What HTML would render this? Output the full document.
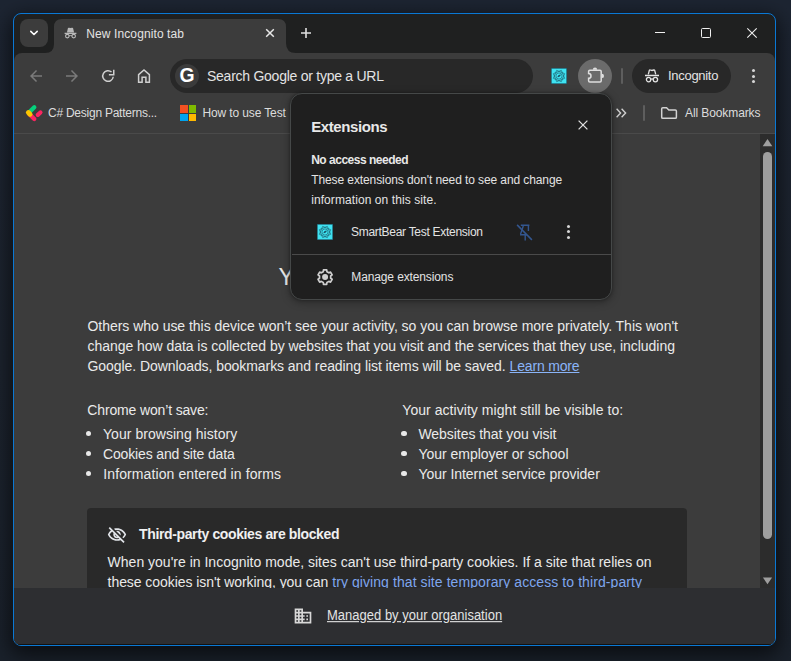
<!DOCTYPE html><html lang="en"><head><meta charset="utf-8"><title>New Incognito tab</title><style>
*{box-sizing:border-box}
html,body{margin:0;padding:0}
body{width:791px;height:661px;overflow:hidden;position:relative;background:#1b212b;font-family:'Liberation Sans',sans-serif;}
#desk{position:absolute;left:0;top:0;width:791px;height:661px;background:linear-gradient(180deg,#1d2532 0%,#1c232e 55%,#1a212b 100%);}
#win{position:absolute;left:13px;top:13px;width:763px;height:633px;border:1px solid #0a78d4;border-radius:8px;overflow:hidden;background:#1f2020;box-shadow:0 6px 20px 3px rgba(0,0,0,.6);}
#pg{position:absolute;left:-14px;top:-14px;width:791px;height:661px;}
.a{position:absolute}
.t{position:absolute;white-space:pre;line-height:1em;}
.t a{color:#8ab4f8;text-decoration:underline;}
.t a.nu{text-decoration:none;color:#7fa6ee}
svg{position:absolute;overflow:visible}
</style></head><body>
<div id="desk"></div>
<div id="win"><div id="pg">
<div class="a" style="left:20px;top:19px;width:28px;height:28px;border-radius:8px;background:#3c3c3c"></div>
<svg style="left:28px;top:27px" width="12" height="12" viewBox="0 0 12 12"><path d="M2.8 4.4 L6 7.5 L9.2 4.4" fill="none" stroke="#fff" stroke-width="1.6" stroke-linecap="round" stroke-linejoin="round"/></svg>
<div class="a" style="left:14px;top:53px;width:761px;height:600px;border-radius:8px 8px 0 0;background:#3c3c3c"></div>
<svg style="left:45px;top:19px" width="252" height="35" viewBox="0 0 252 35"><path d="M0 34 Q9 34 9 25 L9 8 Q9 0 17 0 L233 0 Q241 0 241 8 L241 24 Q241 34 251 34 L251 35 L0 35 Z" fill="#3c3c3c"/></svg>
<svg style="left:62px;top:25px" width="16" height="16" viewBox="62 25 16 16" fill="none" stroke="#b8b8b8"><path d="M66.9 32.4 L67.9 28.3 Q68.1 27.4 69 27.7 L70.5 28.1 L72 27.7 Q72.9 27.4 73.1 28.3 L74.1 32.4 Z" fill="#b8b8b8" stroke="none"/><path d="M64.6 33.4 H76.4" stroke-width="1.2"/><circle cx="67.3" cy="36.1" r="1.75" stroke-width="1.1"/><circle cx="73.7" cy="36.1" r="1.75" stroke-width="1.1"/><path d="M69 35.9 Q70.5 35.2 72 35.9" stroke-width="1"/></svg>
<div class="t" style="left:86.30px;top:28.04px;font-size:12px;font-weight:400;color:#e3e3e3;letter-spacing:0.102px;">New Incognito tab</div>
<svg style="left:264px;top:27px" width="12" height="12" viewBox="0 0 12 12"><path d="M2.2 2.2 L9.8 9.8 M9.8 2.2 L2.2 9.8" stroke="#e8e8e8" stroke-width="1.5" fill="none"/></svg>
<svg style="left:300px;top:27px" width="12" height="12" viewBox="0 0 12 12"><path d="M6 1 V11 M1 6 H11" stroke="#e0e0e0" stroke-width="1.6" fill="none"/></svg>
<div class="a" style="left:655px;top:32px;width:10px;height:1px;background:#f0f0f0"></div>
<div class="a" style="left:701px;top:28px;width:10px;height:10px;border:1px solid #f0f0f0;border-radius:1.5px"></div>
<svg style="left:747px;top:28px" width="10" height="10" viewBox="0 0 10 10"><path d="M0.3 0.3 L9.7 9.7 M9.7 0.3 L0.3 9.7" stroke="#f0f0f0" stroke-width="1.1" fill="none"/></svg>
<svg style="left:27px;top:67px" width="18" height="18" viewBox="0 0 24 24"><path d="M20 11H7.83l5.59-5.59L12 4l-8 8 8 8 1.41-1.41L7.83 13H20v-2z" fill="#7a7a7a"/></svg>
<svg style="left:63px;top:67px" width="18" height="18" viewBox="0 0 24 24"><path d="M20 11H7.83l5.59-5.59L12 4l-8 8 8 8 1.41-1.41L7.83 13H20v-2z" fill="#7a7a7a" transform="translate(24 0) scale(-1 1)"/></svg>
<svg style="left:99px;top:67px" width="18" height="18" viewBox="99 67 18 18" fill="none" stroke="#cfcfcf" stroke-width="1.5"><path d="M113.25 76.74 A5.3 5.3 0 1 1 111.55 72.06"/><path d="M113.75 69.8 V74.75 H108.9"/></svg>
<svg style="left:136px;top:68px" width="16" height="16" viewBox="0 0 16 16"><path d="M2.6 14.3 V6.6 L8 1.9 L13.4 6.6 V14.3 H9.9 V9.2 H6.1 V14.3 Z" fill="none" stroke="#cfcfcf" stroke-width="1.5" stroke-linejoin="miter"/></svg>
<div class="a" style="left:170px;top:59px;width:363px;height:34px;border-radius:17px;background:#282828"></div>
<div class="a" style="left:175px;top:64px;width:24px;height:24px;border-radius:12px;background:#3b3b3b"></div>
<div class="t" style="left:179.6px;top:66.1px;font-size:19.4px;font-weight:700;color:#fff;letter-spacing:0">G</div>
<div class="t" style="left:207.00px;top:69.15px;font-size:14px;font-weight:400;color:#e3e3e3;letter-spacing:-0.256px;">Search Google or type a URL</div>
<svg style="left:551px;top:68px" width="16" height="16" viewBox="0 0 16 16"><rect width="16" height="16" fill="#1d5b6c"/><rect x="0.7" y="0.7" width="14.6" height="14.6" fill="#3fe3f1"/><g fill="none" stroke="#1c6576" stroke-width="0.7"><path d="M13.64 10.33 L5.67 13.64 L2.36 5.67 L10.33 2.36 Z"/><path d="M10.33 13.64 L2.36 10.33 L5.67 2.36 L13.64 5.67 Z"/><circle cx="8" cy="8" r="3.1"/><path d="M6.4 9.3 Q6.6 6.9 9.8 6.6 Q9.4 9.4 6.4 9.3 Z" fill="#17586a" stroke="none"/></g></svg>
<div class="a" style="left:578px;top:59px;width:34px;height:34px;border-radius:17px;background:#6b6b6b"></div>
<svg style="left:585px;top:65px" width="22" height="22" viewBox="585 65 22 22"><path d="M589.8 70.2 H600 Q601.2 70.2 601.2 71.4 V80.7 Q601.2 81.9 600 81.9 H589.8 Q588.6 81.9 588.6 80.7 V78.3 A2.4 2.4 0 0 0 588.6 73.5 V71.4 Q588.6 70.2 589.8 70.2 Z" fill="none" stroke="#dedede" stroke-width="1.5"/><path d="M592.8 69.7 A2.2 2.3 0 0 1 597.2 69.7 Z" fill="#dedede"/><path d="M601.7 73.7 A2.3 2.2 0 0 1 601.7 78.1 Z" fill="#dedede"/></svg>
<div class="a" style="left:621px;top:68px;width:2px;height:16px;border-radius:1px;background:#5e5e5e"></div>
<div class="a" style="left:632px;top:59px;width:99px;height:34px;border-radius:17px;background:#282828"></div>
<svg style="left:644px;top:67.5px" width="16" height="16" viewBox="0 0 16 16" fill="none" stroke="#e3e3e3"><path d="M4.3 6.4 L5.3 2.5 Q5.5 1.8 6.2 2 L8 2.5 L9.8 2 Q10.5 1.8 10.7 2.5 L11.7 6.4" stroke-width="1.3"/><path d="M1 7.5 H15" stroke-width="1.4"/><circle cx="4.6" cy="11.6" r="2.2" stroke-width="1.3"/><circle cx="11.4" cy="11.6" r="2.2" stroke-width="1.3"/><path d="M6.8 11.3 Q8 10.5 9.2 11.3" stroke-width="1.2"/></svg>
<div class="t" style="left:668.00px;top:69.00px;font-size:13px;font-weight:400;color:#e3e3e3;letter-spacing:-0.296px;">Incognito</div>
<div class="a" style="left:751.5px;top:69.0px;width:3px;height:3px;border-radius:50%;background:#d6d6d6"></div>
<div class="a" style="left:751.5px;top:74.5px;width:3px;height:3px;border-radius:50%;background:#d6d6d6"></div>
<div class="a" style="left:751.5px;top:80.0px;width:3px;height:3px;border-radius:50%;background:#d6d6d6"></div>
<svg style="left:25px;top:104px" width="18" height="18" viewBox="25 104 18 18" fill="none" stroke-linecap="round" stroke-width="4.3"><path d="M29.3 114 L34.3 119" stroke="#fa2560"/><path d="M28.8 112.8 L34.3 107.3" stroke="#05d17c"/><path d="M28.4 112.6 L30.0 114.2" stroke="#fdc500" stroke-width="5"/><path d="M37.8 114.8 L40.4 112.5" stroke="#fa2560"/></svg>
<div class="t" style="left:48.00px;top:107.24px;font-size:12px;font-weight:400;color:#dcdcdc;letter-spacing:-0.243px;">C# Design Patterns...</div>
<div class="a" style="left:180px;top:105px;width:7.5px;height:7.5px;background:#f25022"></div>
<div class="a" style="left:188.5px;top:105px;width:7.5px;height:7.5px;background:#7fba00"></div>
<div class="a" style="left:180px;top:113.5px;width:7.5px;height:7.5px;background:#00a4ef"></div>
<div class="a" style="left:188.5px;top:113.5px;width:7.5px;height:7.5px;background:#ffb900"></div>
<div class="t" style="left:202.40px;top:107.24px;font-size:12px;font-weight:400;color:#dcdcdc;letter-spacing:-0.118px;">How to use Test</div>
<svg style="left:615px;top:107px" width="12" height="12" viewBox="0 0 12 12"><path d="M1.6 1.8 L5.6 6 L1.6 10.2 M6.6 1.8 L10.6 6 L6.6 10.2" fill="none" stroke="#d0d0d0" stroke-width="1.4"/></svg>
<div class="a" style="left:643px;top:105px;width:2px;height:16px;border-radius:1px;background:#5e5e5e"></div>
<svg style="left:659px;top:105px" width="20" height="16" viewBox="659 105 20 16"><path d="M661.7 108.8 Q661.7 107.7 662.8 107.7 H666.6 L668.8 110 H675.3 Q676.4 110 676.4 111.1 V117.2 Q676.4 118.3 675.3 118.3 H662.8 Q661.7 118.3 661.7 117.2 Z" fill="none" stroke="#d2d2d2" stroke-width="1.5" stroke-linejoin="round"/></svg>
<div class="t" style="left:685.00px;top:107.24px;font-size:12px;font-weight:400;color:#dcdcdc;letter-spacing:-0.099px;">All Bookmarks</div>
<div class="a" style="left:14px;top:133px;width:762px;height:1px;background:#4a4a4a"></div>
<div class="t" style="left:278.50px;top:266.39px;font-size:23.4px;font-weight:400;color:#e8e8e8;letter-spacing:-0.592px;">You’ve gone Incognito</div>
<div class="t" style="left:87.50px;top:319.15px;font-size:14px;font-weight:400;color:#eaeaea;letter-spacing:-0.030px;">Others who use this device won’t see your activity, so you can browse more privately. This won't</div>
<div class="t" style="left:87.50px;top:339.15px;font-size:14px;font-weight:400;color:#eaeaea;letter-spacing:-0.042px;">change how data is collected by websites that you visit and the services that they use, including</div>
<div class="t" style="left:87.50px;top:359.15px;font-size:14px;font-weight:400;color:#eaeaea;letter-spacing:-0.068px;">Google. Downloads, bookmarks and reading list items will be saved.</div>
<div class="t" style="left:509.60px;top:359.15px;font-size:14px;font-weight:400;color:#eaeaea;letter-spacing:-0.177px;"><a>Learn more</a></div>
<div class="t" style="left:87.30px;top:403.15px;font-size:14px;font-weight:400;color:#eaeaea;letter-spacing:-0.148px;">Chrome won’t save:</div>
<div class="t" style="left:402.30px;top:403.15px;font-size:14px;font-weight:400;color:#eaeaea;letter-spacing:0.051px;">Your activity might still be visible to:</div>
<div class="a" style="left:86px;top:431.0px;width:5.2px;height:5.2px;border-radius:50%;background:#e8e8e8"></div>
<div class="a" style="left:401.4px;top:431.0px;width:5.2px;height:5.2px;border-radius:50%;background:#e8e8e8"></div>
<div class="a" style="left:86px;top:451.0px;width:5.2px;height:5.2px;border-radius:50%;background:#e8e8e8"></div>
<div class="a" style="left:401.4px;top:451.0px;width:5.2px;height:5.2px;border-radius:50%;background:#e8e8e8"></div>
<div class="a" style="left:86px;top:471.0px;width:5.2px;height:5.2px;border-radius:50%;background:#e8e8e8"></div>
<div class="a" style="left:401.4px;top:471.0px;width:5.2px;height:5.2px;border-radius:50%;background:#e8e8e8"></div>
<div class="t" style="left:103.00px;top:427.15px;font-size:14px;font-weight:400;color:#eaeaea;letter-spacing:0.044px;">Your browsing history</div>
<div class="t" style="left:103.00px;top:447.15px;font-size:14px;font-weight:400;color:#eaeaea;letter-spacing:-0.147px;">Cookies and site data</div>
<div class="t" style="left:103.30px;top:467.15px;font-size:14px;font-weight:400;color:#eaeaea;letter-spacing:0.100px;">Information entered in forms</div>
<div class="t" style="left:418.40px;top:427.15px;font-size:14px;font-weight:400;color:#eaeaea;letter-spacing:-0.047px;">Websites that you visit</div>
<div class="t" style="left:418.40px;top:447.15px;font-size:14px;font-weight:400;color:#eaeaea;letter-spacing:-0.016px;">Your employer or school</div>
<div class="t" style="left:418.40px;top:467.15px;font-size:14px;font-weight:400;color:#eaeaea;letter-spacing:-0.033px;">Your Internet service provider</div>
<div class="a" style="left:87px;top:508px;width:600px;height:120px;border-radius:4px;background:#292929"></div>
<svg style="left:107px;top:524.6px" width="20" height="20" viewBox="0 0 24 24"><path fill="#e0e3e8" d="M12 6c3.79 0 7.17 2.13 8.82 5.5-.59 1.22-1.42 2.27-2.41 3.12l1.41 1.41c1.39-1.23 2.49-2.77 3.18-4.53C21.27 7.11 17 4 12 4c-1.27 0-2.49.2-3.64.57l1.65 1.65C10.66 6.09 11.32 6 12 6zm-1.07 1.14L13 9.21c.57.25 1.03.71 1.28 1.28l2.07 2.07c.08-.34.14-.7.14-1.07C16.5 9.01 14.48 7 12 7c-.37 0-.72.05-1.07.14zM2.01 3.87l2.68 2.68C3.06 7.83 1.77 9.53 1 11.5 2.73 15.89 7 19 12 19c1.52 0 2.98-.29 4.32-.82l3.42 3.42 1.41-1.41L3.42 2.45 2.01 3.87zm7.5 7.5l2.61 2.61c-.04.01-.08.02-.12.02-1.38 0-2.5-1.12-2.5-2.5 0-.05.01-.08.01-.13zm-3.4-3.4l1.75 1.75c-.23.55-.36 1.15-.36 1.78 0 2.48 2.02 4.5 4.5 4.5.63 0 1.23-.13 1.77-.36l.98.98c-.88.24-1.8.38-2.75.38-3.79 0-7.17-2.13-8.82-5.5.7-1.43 1.72-2.61 2.93-3.53z"/></svg>
<div class="t" style="left:139.10px;top:527.15px;font-size:14px;font-weight:700;color:#f0f0f0;letter-spacing:-0.374px;">Third-party cookies are blocked</div>
<div class="t" style="left:107.60px;top:555.45px;font-size:14px;font-weight:400;color:#eaeaea;letter-spacing:0.002px;">When you're in Incognito mode, sites can't use third-party cookies. If a site that relies on</div>
<div class="t" style="left:107.60px;top:575.35px;font-size:14px;font-weight:400;color:#eaeaea;letter-spacing:-0.063px;">these cookies isn't working, you can</div>
<div class="t" style="left:332.20px;top:575.35px;font-size:14px;font-weight:400;color:#eaeaea;letter-spacing:0.078px;"><a class="nu">try giving that site temporary access to third-party</a></div>
<div class="a" style="left:760px;top:134px;width:16px;height:454px;background:#2c2c2c"></div>
<svg style="left:760px;top:134px" width="15" height="454" viewBox="760 134 15 454"><path d="M767.5 139 L772.3 146.2 L762.7 146.2 Z" fill="#9e9e9e"/><rect x="763" y="152" width="9" height="387" rx="4.5" fill="#9e9e9e"/><path d="M762.9 577.5 L772.1 577.5 L767.5 584.3 Z" fill="#9e9e9e"/></svg>
<div class="a" style="left:14px;top:588px;width:762px;height:58px;background:#2d2e31"></div>
<div class="a" style="left:14px;top:644px;width:762px;height:1px;background:#111"></div>
<svg style="left:293px;top:605.5px" width="20" height="20" viewBox="0 0 24 24"><path d="M12 7V3H2v18h20V7H12zM6 19H4v-2h2v2zm0-4H4v-2h2v2zm0-4H4V9h2v2zm0-4H4V5h2v2zm4 12H8v-2h2v2zm0-4H8v-2h2v2zm0-4H8V9h2v2zm0-4H8V5h2v2zm10 12h-8v-2h2v-2h-2v-2h2v-2h-2V9h8v10zm-2-8h-2v2h2v-2zm0 4h-2v2h2v-2z" fill="#d8d8d8"/></svg>
<div class="t" style="left:327.00px;top:608.70px;font-size:13px;font-weight:400;color:#e3e3e3;letter-spacing:0.008px;text-decoration:underline;transform:scaleY(1.11);transform-origin:0 84.65%;">Managed by your organisation</div>
<div class="a" style="left:290px;top:93px;width:322px;height:207px;border-radius:12px;background:#1f1f1f;border:1px solid #454848;box-shadow:0 2px 8px rgba(0,0,0,.35),0 0 3px rgba(0,0,0,.3)"></div>
<div class="t" style="left:311.20px;top:118.80px;font-size:15px;font-weight:700;color:#e8e8e8;letter-spacing:-0.392px;">Extensions</div>
<svg style="left:577px;top:119px" width="12" height="12" viewBox="0 0 12 12"><path d="M1.6 1.6 L10.4 10.4 M10.4 1.6 L1.6 10.4" stroke="#dcdcdc" stroke-width="1.3" fill="none"/></svg>
<div class="t" style="left:311.20px;top:153.54px;font-size:12px;font-weight:700;color:#e8e8e8;letter-spacing:-0.488px;">No access needed</div>
<div class="t" style="left:311.20px;top:173.94px;font-size:12px;font-weight:400;color:#e3e3e3;letter-spacing:-0.094px;">These extensions don't need to see and change</div>
<div class="t" style="left:311.20px;top:193.74px;font-size:12px;font-weight:400;color:#e3e3e3;letter-spacing:0.079px;">information on this site.</div>
<svg style="left:317px;top:224px" width="16" height="16" viewBox="0 0 16 16"><rect width="16" height="16" fill="#1d5b6c"/><rect x="0.7" y="0.7" width="14.6" height="14.6" fill="#3fe3f1"/><g fill="none" stroke="#1c6576" stroke-width="0.7"><path d="M13.64 10.33 L5.67 13.64 L2.36 5.67 L10.33 2.36 Z"/><path d="M10.33 13.64 L2.36 10.33 L5.67 2.36 L13.64 5.67 Z"/><circle cx="8" cy="8" r="3.1"/><path d="M6.4 9.3 Q6.6 6.9 9.8 6.6 Q9.4 9.4 6.4 9.3 Z" fill="#17586a" stroke="none"/></g></svg>
<div class="t" style="left:351.00px;top:226.04px;font-size:12px;font-weight:400;color:#e3e3e3;letter-spacing:-0.283px;">SmartBear Test Extension</div>
<svg style="left:515px;top:222px" width="20" height="20" viewBox="515 222 20 20" fill="none" stroke="#33568f" stroke-width="1.4"><path d="M520.8 225.3 H529.4 M528.4 225.3 V231 M523.3 226 L520.5 234.2 M520 234.7 H527 M525.2 234.7 V240.6"/><path d="M517.1 224.9 L531.9 239.9" stroke-width="1.5"/></svg>
<div class="a" style="left:567.3px;top:224.8px;width:3.2px;height:3.2px;border-radius:50%;background:#d6d6d6"></div>
<div class="a" style="left:567.3px;top:230.3px;width:3.2px;height:3.2px;border-radius:50%;background:#d6d6d6"></div>
<div class="a" style="left:567.3px;top:235.8px;width:3.2px;height:3.2px;border-radius:50%;background:#d6d6d6"></div>
<div class="a" style="left:292px;top:254px;width:319px;height:1px;background:#4a4a4a"></div>
<svg style="left:317px;top:269px" width="16.2" height="16.2" viewBox="0 0 16.2 16.2"><path d="M6.28 2.70 L6.49 0.88 L9.71 0.88 L9.92 2.70 L11.87 3.82 L13.55 3.09 L15.16 5.89 L13.69 6.97 L13.69 9.23 L15.16 10.31 L13.55 13.11 L11.87 12.38 L9.92 13.50 L9.71 15.32 L6.49 15.32 L6.28 13.50 L4.33 12.38 L2.65 13.11 L1.04 10.31 L2.51 9.23 L2.51 6.97 L1.04 5.89 L2.65 3.09 L4.33 3.82 Z" fill="none" stroke="#cfcfcf" stroke-width="1.7" stroke-linejoin="round"/><circle cx="8.1" cy="8.1" r="3.0" fill="#cfcfcf"/></svg>
<div class="t" style="left:351.30px;top:270.74px;font-size:12px;font-weight:400;color:#e3e3e3;letter-spacing:-0.124px;">Manage extensions</div>
</div></div></body></html>
